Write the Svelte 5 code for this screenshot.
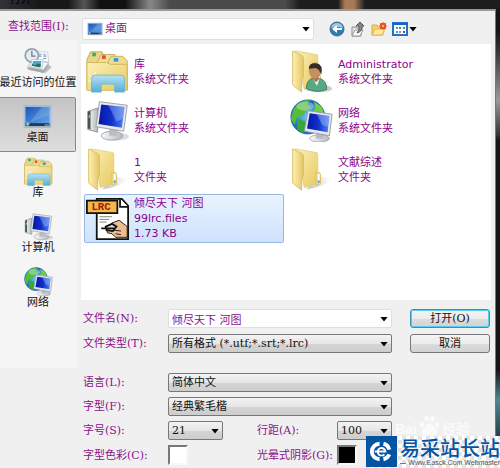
<script lang="ts">
  interface Place {
    label: string;
    icon: string;
  }

  interface Entry {
    lines: string[];
    icon: string;
  }

  const places: Place[] = [
    { label: "最近访问的位置", icon: "recent" },
    { label: "桌面", icon: "desktop" },
    { label: "库", icon: "library" },
    { label: "计算机", icon: "computer" },
    { label: "网络", icon: "network" },
  ];

  const entries: Entry[] = [
    { lines: ["库", "系统文件夹"], icon: "library" },
    { lines: ["Administrator", "系统文件夹"], icon: "user" },
    { lines: ["计算机", "系统文件夹"], icon: "computer" },
    { lines: ["网络", "系统文件夹"], icon: "network" },
    { lines: ["1", "文件夹"], icon: "folder" },
    { lines: ["文献综述", "文件夹"], icon: "folder" },
    { lines: ["倾尽天下 河图", "99lrc.files", "1.73 KB"], icon: "lrc" },
  ];

  let activePlace = $state("桌面");
  let selected = $state("倾尽天下 河图");
  let fileName = $state("倾尽天下 河图");
</script>

{#snippet monitor()}
  <path d="M2 14 13 10v27L2 34z" fill="url(#metal)" stroke="#8a8f94" />
  <path d="M2 14 5 13v21l-3-1z" fill="#4b5055" />
  <path d="M3 18h2v3H3z" fill="#6be04a" />
  <ellipse cx="36" cy="42" rx="12" ry="4" fill="#000" opacity=".14" />
  <ellipse cx="29" cy="41" rx="12" ry="5" fill="url(#metal)" stroke="#9ba1a6" />
  <path d="m26 33 9 1-1 7h-8z" fill="#b8bdc2" />
  <path d="M15 3 46 7l-4 29-31-5z" fill="#e6e8ea" stroke="#969ca3" />
  <path d="M17 6 43 9l-3 23-26-4z" fill="url(#screen)" />
  <path d="m25 7 18 2-2 13-7 3z" fill="#a9c6ff" opacity=".4" />
{/snippet}

{#snippet openFolder()}
  <path d="m18 46 16-14 12 3q-7 9-28 11z" fill="url(#shade)" />
  <path d="m6 1 23 4q2 0 2 2v33l-15 4z" fill="url(#yellow)" stroke="#e3cf85" />
  <path d="M31 27q3 0 3 3v10l-5 2V28z" fill="#f3dc84" stroke="#d9be62" />
  <path d="M31 29h2v8h-2z" fill="#fff" />
  <path d="M31 36h2v3h-2z" fill="#54a5d8" />
  <path d="M3 1 13 6q2 1 2 3v22l-2 3v13L4 40q-1-1-1-2z" fill="url(#yellowDeep)" stroke="#d8bc62" />
{/snippet}

{#snippet icon(name: string)}
  <svg viewBox="0 0 48 48" aria-hidden="true">
    {#if name === "recent"}
      <path d="m7 38 29 5 10-10-5-3z" fill="#000" opacity=".22" />
      <path d="m6 33 26 5 9-11v4l-9 12-26-6z" fill="#a4a9ad" />
      <path d="m6 33 8-12 27 5-9 12z" fill="#f3f5f6" stroke="#a3a8ad" />
      <path d="M21 8h18l2 17-18-2z" fill="#fbfcfc" stroke="#b6bdc2" />
      <path d="M24 12h5M24 15h5M32 12h4M32 15h5M32 19h5" stroke="#6e9cc3" stroke-width="2" />
      <circle cx="13" cy="14" r="11" fill="#e4edf3" stroke="#93a5b1" stroke-width="3" />
      <path d="M13 6v9h6" fill="none" stroke="#617888" stroke-width="2" />
      <path d="M13 21h19l-3 15-18-3z" fill="#fff" stroke="#a6b0b8" />
      <path d="M15 23h14l-2 10-14-2z" fill="#4ca8d6" />
      <path d="m14 28 5 2 4-3 5 2-1 5-14-3z" fill="#28745a" />
    {:else if name === "desktop"}
      <path d="M2 6h44v36H2z" fill="#b9d0e8" stroke="#8ca7c5" />
      <path d="M4 8h40v29H4z" fill="url(#desk)" />
      <path d="M31 8h13v14L12 33z" fill="#fff" opacity=".16" />
      <path d="M4 35h40v5H4z" fill="#273a50" />
      <circle cx="8" cy="36" r="3" fill="#55c5df" />
      <path d="M6 36h3v3H6z" fill="#f3bd3a" />
      <path d="M36 37h7v2h-7z" fill="#8ea5b8" />
    {:else if name === "library"}
      <path d="M1 11 5 2h13l3 7v34H1z" fill="#ead48b" stroke="#c5a954" />
      <path d="M7 3h4v4H7z" fill="#2eb34b" />
      <path d="m13 13 4-8h15l3 7v31H13z" fill="#f2df9d" stroke="#c5a954" />
      <path d="M18 6h4v4h-4z" fill="#e34a28" />
      <path d="m24 15 4-8h13l5 5v32H24z" fill="#f0dc91" stroke="#c5a954" />
      <path d="M31 9h5v4h-5z" fill="#2e9bd8" />
      <path d="M1 14h22l4 2h19v29H1z" fill="url(#yellow)" stroke="#cfb358" />
      <path d="m10 33 2-12-5 9-6-5 5 7-5 4 8-1z" fill="#fff" opacity=".65" />
      <path d="M6 47V32q0-4 4-4h29q4 0 4 4v15H32v-9H17v9z" fill="url(#glass)" stroke="#6cb7d7" />
    {:else if name === "computer"}
      {@render monitor()}
    {:else if name === "network"}
      <circle cx="20" cy="20" r="19" fill="url(#ocean)" stroke="#286fae" />
      <path d="M4 11Q11 1 22 1l-3 5 5 3-7 4-2 6-7 1-3 9-4-7z" fill="#56bd3c" />
      <path d="m27 3 8 5 4 10-7 3-7-5 3-6z" fill="#70cd48" />
      <path d="m8 22 9 3 2 6-4 7-7-4z" fill="#39a934" />
      <ellipse cx="17" cy="8" rx="10" ry="5" fill="#fff" opacity=".3" />
      <ellipse cx="33" cy="44" rx="11" ry="4" fill="url(#metal)" stroke="#a3a7ac" />
      <path d="m29 35 8 1v8h-8z" fill="#b5bac0" />
      <path d="m20 13 27 4-3 24-28-5z" fill="#e5e7eb" stroke="#90979f" />
      <path d="m22 16 22 3-2 18-23-4z" fill="url(#screen)" />
      <path d="m30 17 14 2-2 12-6-2z" fill="#acc9ff" opacity=".42" />
    {:else if name === "user"}
      {@render openFolder()}
      <ellipse cx="36" cy="43" rx="11" ry="4" fill="#000" opacity=".2" />
      <path d="M18 43q1-11 9-12l7 1q7 3 7 12-12 5-23-1z" fill="#58a884" stroke="#39795e" />
      <path d="m25 31 5 9 3-8z" fill="#f1f6f4" />
      <path d="M25 25h7v8l-3 3-4-4z" fill="#a97446" />
      <ellipse cx="28" cy="23" rx="7" ry="9" fill="#c78e5e" />
      <path d="M21 21q0-7 9-6 7 1 5 12l-3-5-3-2z" fill="#302d2a" />
    {:else if name === "folder"}
      {@render openFolder()}
    {:else if name === "lrc"}
      <path d="M12 2h28l7 8v37H12z" fill="#fff" stroke="#111" stroke-width="2" />
      <path d="M38 2v9h9" fill="#fff" stroke="#111" stroke-width="2" />
      <path d="M1 4h34v14H1z" fill="#f7b64c" stroke="#111" stroke-width="2" />
      <text x="6" y="15" font-size="12" font-weight="700" fill="#96200d">LRC</text>
      <path d="M15 22h14M15 25h11M15 28h8" stroke="#777" />
      <path d="m23 36 6-7 8-3 9 7v12H33l-4-4-5-1z" fill="#efbd8d" stroke="#111" />
      <path d="M17 35h15M22 33l7-3 5 3-4 5-7-1z" fill="#ddd" stroke="#111" stroke-width="2" />
      <path d="m31 37 8 1M33 41l6 1" stroke="#111" />
    {/if}
  </svg>
{/snippet}

<svg class="defs" width="0" height="0" aria-hidden="true">
  <linearGradient id="metal"><stop stop-color="#fafafa" /><stop offset="1" stop-color="#b4b9be" /></linearGradient>
  <linearGradient id="screen"><stop stop-color="#0717a8" /><stop offset=".5" stop-color="#1130c8" /><stop offset="1" stop-color="#4e86f0" /></linearGradient>
  <linearGradient id="yellow" x2="1" y2="1"><stop stop-color="#fbf0b8" /><stop offset="1" stop-color="#e8c95f" /></linearGradient>
  <linearGradient id="yellowDeep"><stop stop-color="#fff1b0" /><stop offset="1" stop-color="#e4c566" /></linearGradient>
  <linearGradient id="glass" x2="0" y2="1"><stop stop-color="#b6e2f0" /><stop offset="1" stop-color="#55acd6" /></linearGradient>
  <linearGradient id="desk" x2="1" y2="1"><stop stop-color="#1d55b5" /><stop offset="1" stop-color="#63a7ee" /></linearGradient>
  <linearGradient id="shade"><stop stop-color="#777" stop-opacity=".5" /><stop offset="1" stop-color="#999" stop-opacity="0" /></linearGradient>
  <radialGradient id="ocean"><stop stop-color="#70d0f5" /><stop offset="1" stop-color="#1662b5" /></radialGradient>
</svg>

<main class="window">
  <div class="title-bar"><span>打开</span></div>

  <div class="dialog">
    <header class="look-in">
      <label for="folder">查找范围(I):</label>
      <div class="combo white folder-combo">
        <span class="combo-icon">{@render icon("desktop")}</span>
        <select id="folder"><option>桌面</option></select>
      </div>
      <div class="toolbar">
        <button type="button" aria-label="后退">
          <svg viewBox="0 0 16 16">
            <circle cx="8" cy="8" r="7" fill="#287db4" stroke="#486b85" />
            <path d="M2 7q1-5 6-5t6 5q-6-2-12 0z" fill="#9cc9e3" />
            <path d="m3 8 5-4v3h5v2H8v3z" fill="#fff" />
          </svg>
        </button>
        <button type="button" aria-label="向上">
          <svg viewBox="0 0 16 16">
            <path d="M2 6h4l1 1h4v8H2z" fill="#e4e4e4" stroke="#8c8c8c" />
            <path d="m2 15 3-6h8l-3 6z" fill="#f8f8f8" stroke="#999" />
            <path d="M7 12q3-3 2-7H6l4-4 4 4h-2q1 5-5 7z" fill="#888" stroke="#555" />
          </svg>
        </button>
        <button type="button" aria-label="新建文件夹">
          <svg viewBox="0 0 16 16">
            <path d="M1 4h5l1 2h5v8H1z" fill="#f4d26b" stroke="#d5ad48" />
            <path d="m1 14 3-6h10l-3 6z" fill="#ffec9f" stroke="#dcb650" />
            <path d="m12 1 1 1 2 0 0 2 1 1-1 1 0 2-2 0-1 1-1-1-2 0 0-2-1-1 1-1 0-2 2 0z" fill="#ec5423" />
            <circle cx="12" cy="5" r="1" fill="#ffe26d" />
          </svg>
        </button>
        <button type="button" class="views" aria-label="视图">
          <svg viewBox="0 0 16 16">
            <path d="M1 2h14v12H1z" fill="#fff" stroke="#2371c9" stroke-width="2" />
            <path d="M1 2h14v2H1z" fill="#1764c0" />
            <path d="M4 6h2v2H4zM4 10h2v2H4z" fill="#3aa0d8" />
            <path d="M7 6h2v2H7z" fill="#5c6fc0" />
            <path d="M7 10h2v2H7z" fill="#e07a32" />
            <path d="M11 6h2v2h-2z" fill="#37a34c" />
            <path d="M11 10h2v2h-2z" fill="#2c61b5" />
          </svg>
        </button>
      </div>
    </header>

    <div class="body">
      <nav class="places">
        {#each places as place (place.label)}
          <button
            type="button"
            class:active={activePlace === place.label}
            onclick={() => (activePlace = place.label)}
          >
            {@render icon(place.icon)}
            <span>{place.label}</span>
          </button>
        {/each}
      </nav>

      <div class="content">
        <div class="files">
          {#each entries as entry (entry.lines[0])}
            <button
              type="button"
              class="entry"
              class:selected={selected === entry.lines[0]}
              onclick={() => (selected = entry.lines[0])}
            >
              {@render icon(entry.icon)}
              <span class="entry-text">
                {#each entry.lines as line}
                  <span>{line}</span>
                {/each}
              </span>
            </button>
          {/each}
        </div>

        <form class="file-form" onsubmit={(event) => event.preventDefault()}>
          <label for="name">文件名(N):</label>
          <div class="combo white"><input id="name" type="text" bind:value={fileName} /></div>
          <button type="submit" class="push primary">打开(O)</button>
          <label for="type">文件类型(T):</label>
          <div class="combo">
            <select id="type"><option>所有格式 (*.utf;*.srt;*.lrc)</option></select>
          </div>
          <button type="button" class="push">取消</button>
        </form>

        <div class="options">
          <label for="language">语言(L):</label>
          <div class="combo"><select id="language"><option>简体中文</option></select></div>
          <label for="face">字型(F):</label>
          <div class="combo"><select id="face"><option>经典繁毛楷</option></select></div>
          <label for="size">字号(S):</label>
          <div class="pair">
            <div class="combo small"><select id="size"><option>21</option></select></div>
            <label for="spacing">行距(A):</label>
            <div class="combo small"><select id="spacing"><option>100</option></select></div>
          </div>
          <label for="color">字型色彩(C):</label>
          <div class="pair swatches">
            <button type="button" id="color" class="swatch" aria-label="字型色彩"></button>
            <label for="shadow">光晕式阴影(G):</label>
            <button type="button" id="shadow" class="swatch black" aria-label="光晕式阴影"></button>
          </div>
        </div>
      </div>
    </div>
  </div>

  <div class="baidu">
    <span>Bai</span>
    <svg viewBox="0 0 28 28" aria-hidden="true">
      <ellipse cx="4" cy="13" rx="3" ry="4" />
      <ellipse cx="10" cy="5" rx="3" ry="4" />
      <ellipse cx="18" cy="5" rx="3" ry="4" />
      <ellipse cx="24" cy="13" rx="3" ry="4" />
      <path d="M14 11q4 0 6 5l4 4q2 7-5 7H9q-7 0-5-7l4-4q2-5 6-5z" />
    </svg>
    <span>经验</span>
  </div>

  <div class="brand">
    <svg viewBox="0 0 32 32" aria-hidden="true">
      <path d="M0 0h32v32H0z" fill="#0454a4" />
      <path d="M14 8A8 8 0 0 0 14 24M18 8a8 8 0 0 1 6 6M18 24a8 8 0 0 0 6-5" fill="none" stroke="#fff" stroke-width="4" />
      <path d="M19 19a4 4 0 1 1 1-3H9" fill="none" stroke="#fff" stroke-width="2" />
      <path d="M16 5v6M16 21v6" stroke="#0454a4" stroke-width="2" />
    </svg>
    <div class="brand-text">
      <strong>易采站长站</strong>
      <small>Www.Easck.Com Webmaster</small>
    </div>
  </div>
</main>

<style>
  :global(body) {
    margin: 0;
  }

  .window {
    position: relative;
    display: flex;
    flex-direction: column;
    box-sizing: border-box;
    min-height: 100vh;
    padding-right: 4px;
    overflow: hidden;
    background: linear-gradient(#161616 0 30px, #333 50px, #999 100px, #333 135px, #151515 140px 370px, #4f8793 400px, #23414a 436px);
    font: 11px/15px "DejaVu Serif", "Noto Sans CJK SC", serif;
    color: #8b118b;
  }

  .defs {
    position: absolute;
  }

  .title-bar {
    height: 9px;
    margin-right: -4px;
    overflow: hidden;
    background: linear-gradient(90deg, #33303a, #171717 40px 68px, #555 84px, #111 100px 125px, #888 150px, #4b4b4b 170px 285px, #1d1d1d 300px 338px, #a77b55 345px 354px, #1d1d1d 365px);
  }

  .title-bar span {
    display: block;
    margin: -8px 0 0 10px;
    color: #000;
  }

  .dialog {
    flex: 1;
    border-top: 2px solid #999;
    border-right: 1px solid #777;
    background: #f0f0f0;
  }

  button,
  select,
  input {
    box-sizing: border-box;
    margin: 0;
    padding: 0;
    border: 0;
    background: none;
    font: inherit;
    color: inherit;
  }

  label {
    white-space: nowrap;
  }

  .look-in {
    display: flex;
    align-items: center;
    height: 29px;
    padding: 2px 78px 0 8px;
    box-sizing: border-box;
  }

  .look-in label {
    width: 74px;
  }

  .folder-combo {
    flex: 1;
    margin-top: 4px;
  }

  .combo {
    position: relative;
    box-sizing: border-box;
    height: 19px;
    border: 1px solid #777;
    border-radius: 2px;
    background: linear-gradient(#f3f3f3, #e6e6e6 50%, #d5d5d5 51%, #cdcdcd);
    color: #111;
  }

  .combo.folder-combo {
    height: 22px;
  }

  .combo.white {
    border-color: #dcdfe6;
    background: #fff;
    color: #8b118b;
  }

  .combo::after,
  .views::after {
    content: "";
    position: absolute;
    top: 50%;
    right: 3px;
    width: 8px;
    height: 5px;
    margin-top: -2px;
    background: #000;
    clip-path: polygon(0 0, 100% 0, 50% 100%);
    pointer-events: none;
  }

  .combo select,
  .combo input {
    display: block;
    width: 100%;
    height: 100%;
    padding: 0 14px 0 3px;
    appearance: none;
    outline: 0;
  }

  .combo .combo-icon {
    position: absolute;
    left: 4px;
    top: 2px;
    width: 16px;
    height: 16px;
  }

  .combo-icon svg {
    display: block;
  }

  .combo.folder-combo select {
    padding-left: 22px;
  }

  .toolbar {
    display: flex;
    gap: 5px;
    margin: 4px 0 0 15px;
  }

  .toolbar button {
    width: 16px;
    height: 16px;
  }

  .toolbar svg {
    display: block;
    width: 16px;
    height: 16px;
  }

  .toolbar .views {
    position: relative;
    width: 25px;
  }

  .views::after {
    right: 0;
  }

  .body {
    display: flex;
    align-items: flex-start;
  }

  .places {
    display: flex;
    flex-direction: column;
    flex: 0 0 77px;
    width: 77px;
    padding: 2px 0 51px;
    background: #f5f5f5;
  }

  .places button {
    display: flex;
    flex-direction: column;
    align-items: center;
    height: 55px;
    padding-top: 5px;
    margin-right: 1px;
    color: #111;
    line-height: 14px;
    white-space: nowrap;
  }

  .places svg {
    flex: none;
    width: 29px;
    height: 29px;
  }

  .places .active {
    padding-top: 4px;
    border: 1px solid #888;
    border-left: 0;
    border-radius: 0 2px 2px 0;
    background: linear-gradient(#c4c4c4, #dedede);
  }

  .content {
    flex: 1;
    min-width: 0;
    padding: 4px 4px 0;
  }

  .files {
    display: grid;
    grid-template-columns: repeat(auto-fill, 200px);
    grid-auto-rows: 49px;
    align-content: start;
    gap: 0 4px;
    box-sizing: border-box;
    min-height: 256px;
    padding: 3px 0 0 3px;
    background: #fff;
    font-family: "DejaVu Sans", "Noto Sans CJK SC", sans-serif;
  }

  .entry {
    display: flex;
    align-items: center;
    gap: 5px;
    padding: 0 1px;
    border: 1px solid transparent;
    border-radius: 2px;
    text-align: left;
    color: #8b008b;
  }

  .entry.selected {
    border-color: #94b8e2;
    background: linear-gradient(#eaf3fe, #cde2fc);
  }

  .entry svg {
    width: 43px;
    height: 43px;
    font-family: "Liberation Mono", monospace;
  }

  .entry-text span {
    display: block;
  }

  .file-form,
  .options {
    display: grid;
    align-items: center;
    padding: 0 1px 0 2px;
  }

  .file-form {
    grid-template-columns: 85px 1fr 80px;
    row-gap: 6px;
    margin-top: 9px;
  }

  .push {
    height: 19px;
    border: 1px solid #777;
    border-radius: 3px;
    background: linear-gradient(#f4f4f4, #ececec 50%, #dcdcdc 51%, #d2d2d2);
    color: #111;
  }

  .push.primary {
    border-color: #3c8fb3;
    box-shadow: inset 0 0 0 1px #57cdf0;
  }

  .file-form .combo {
    margin-right: 18px;
  }

  .options {
    grid-template-columns: 85px 1fr;
    row-gap: 5px;
    margin-top: 20px;
    padding-right: 99px;
  }

  .pair {
    display: flex;
    align-items: center;
  }

  .pair label {
    width: 80px;
    margin-left: auto;
  }

  .small {
    width: 55px;
  }

  .swatches {
    padding-right: 35px;
  }

  .swatch {
    width: 20px;
    height: 20px;
    border: 2px solid;
    border-color: #777 #f8f8f8 #f8f8f8 #777;
    background: #fff;
  }

  .swatch.black {
    background: #000;
  }

  .baidu {
    position: absolute;
    right: 30px;
    bottom: 32px;
    display: flex;
    align-items: flex-end;
    color: #fff;
    font: 700 14px/14px "Liberation Sans", "Noto Sans CJK SC", sans-serif;
    opacity: .7;
    pointer-events: none;
  }

  .baidu svg {
    width: 25px;
    height: 21px;
    fill: #fff;
  }

  .brand {
    position: absolute;
    right: 0;
    bottom: 0;
    display: flex;
    gap: 3px;
    padding-bottom: 1px;
    background: repeating-conic-gradient(#e4e4e4 0 25%, #fff 0 50%) 0 0 / 8px 8px;
    color: #0454a4;
  }

  .brand svg {
    width: 31px;
    height: 31px;
  }

  .brand-text {
    display: flex;
    flex-direction: column;
    width: 100px;
  }

  .brand strong {
    font: 500 20px/23px "Noto Sans CJK SC", sans-serif;
    white-space: nowrap;
  }

  .brand small {
    display: flex;
    align-items: center;
    gap: 2px;
    color: #555;
    font: 7px/8px "Liberation Sans", sans-serif;
    white-space: nowrap;
  }

  .brand small::before {
    content: "";
    flex: 1;
    height: 1px;
    background: #777;
  }
</style>
